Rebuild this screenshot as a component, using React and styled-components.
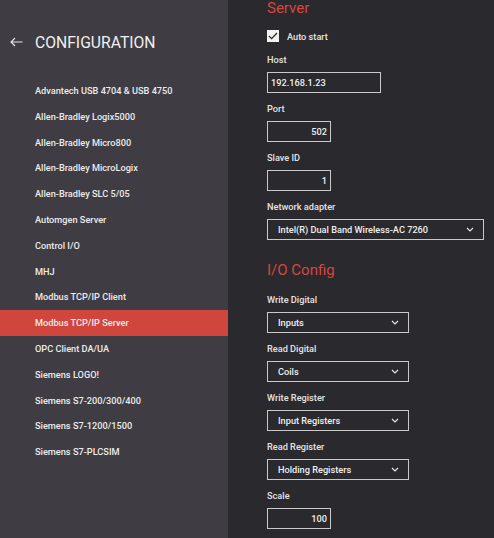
import React, { useState } from "react";
import styled, { createGlobalStyle } from "styled-components";

const GlobalStyle = createGlobalStyle`
  html, body {
    margin: 0;
    padding: 0;
    background: #2a292d;
    font-family: Roboto, "Liberation Sans", sans-serif;
  }
`;

const Page = styled.div`
  display: flex;
  width: 494px;
  height: 538px;
  overflow: hidden;
`;

const Sidebar = styled.div`
  width: 228px;
  flex-shrink: 0;
  background: #3f3d43;
  color: #ececec;
`;

const TitleBar = styled.div`
  display: flex;
  align-items: center;
  height: 42px;
  padding: 21px 0 0 10px;
  gap: 12px;
`;

const Title = styled.h1`
  margin: 0;
  font-size: 15.7px;
  font-weight: 400;
  color: #f0f0f0;
`;

const List = styled.ul`
  list-style: none;
  margin: 15px 0 0;
  padding: 0;
`;

const Item = styled.li`
  height: 25.8px;
  line-height: 25.8px;
  padding-left: 35px;
  font-size: 9.2px;
  font-weight: 500;
  color: #ececec;
  background: ${(p) => (p.$active ? "#d1463c" : "transparent")};
`;

const Main = styled.div`
  flex: 1;
  padding: 0 0 0 39px;
  color: #e4e4e4;
`;

const Heading = styled.h2`
  margin: ${(p) => (p.$first ? "-1px 0 13px" : "11px 0 15px")};
  font-size: 15px;
  font-weight: 400;
  color: #d7463e;
  line-height: 18px;
`;

const CheckRow = styled.label`
  display: flex;
  align-items: center;
  gap: 8px;
  font-size: 9.2px;
  font-weight: 500;
  margin-bottom: 12px;
`;

const Box = styled.span`
  width: 12px;
  height: 12px;
  background: #f2f2f2;
  display: flex;
  align-items: center;
  justify-content: center;
`;

const Field = styled.div`
  display: flex;
  flex-direction: column;
  gap: 6px;
  height: 49px;
`;

const Label = styled.div`
  font-size: 9.2px;
  font-weight: 500;
  line-height: 12px;
  height: 12px;
`;

const Input = styled.input`
  box-sizing: border-box;
  display: block;
  width: ${(p) => p.$w}px;
  height: 21px;
  margin: 0;
  background: transparent;
  border: 1px solid #c9c9c9;
  color: #f0f0f0;
  font-family: Roboto, "Liberation Sans", sans-serif;
  font-size: 9.2px;
  font-weight: 500;
  padding: 0 3px;
  text-align: ${(p) => (p.$right ? "right" : "left")};
  outline: none;
`;

const Select = styled.div`
  box-sizing: border-box;
  display: flex;
  align-items: center;
  justify-content: space-between;
  width: ${(p) => p.$w}px;
  height: 21px;
  flex-shrink: 0;
  border: 1px solid #c9c9c9;
  padding: 0 9px 0 10px;
  font-size: 9.2px;
  font-weight: 500;
  color: #f0f0f0;
`;

const Chevron = () => (
  <svg width="8" height="5" viewBox="0 0 8 5">
    <path d="M1 1l3 3 3-3" fill="none" stroke="#e8e8e8" strokeWidth="1.1" />
  </svg>
);

const items = [
  "Advantech USB 4704 & USB 4750",
  "Allen-Bradley Logix5000",
  "Allen-Bradley Micro800",
  "Allen-Bradley MicroLogix",
  "Allen-Bradley SLC 5/05",
  "Automgen Server",
  "Control I/O",
  "MHJ",
  "Modbus TCP/IP Client",
  "Modbus TCP/IP Server",
  "OPC Client DA/UA",
  "Siemens LOGO!",
  "Siemens S7-200/300/400",
  "Siemens S7-1200/1500",
  "Siemens S7-PLCSIM",
];

const ioSelects = [
  ["Write Digital", "Inputs"],
  ["Read Digital", "Coils"],
  ["Write Register", "Input Registers"],
  ["Read Register", "Holding Registers"],
];

export default function App() {
  const [active] = useState("Modbus TCP/IP Server");

  return (
    <>
      <GlobalStyle />
      <Page>
        <Sidebar>
          <TitleBar>
            <svg width="13" height="10" viewBox="0 0 13 10">
              <path d="M12.5 5H1M5 1L1 5l4 4" fill="none" stroke="#e8e8e8" strokeWidth="1.1" />
            </svg>
            <Title>CONFIGURATION</Title>
          </TitleBar>
          <List>
            {items.map((it) => (
              <Item key={it} $active={it === active}>
                {it}
              </Item>
            ))}
          </List>
        </Sidebar>
        <Main>
          <Heading $first>Server</Heading>
          <CheckRow>
            <Box>
              <svg width="10" height="8" viewBox="0 0 10 8">
                <path d="M1 4l2.6 2.6L9 1" fill="none" stroke="#2a292d" strokeWidth="1.3" />
              </svg>
            </Box>
            Auto start
          </CheckRow>
          <Field>
            <Label>Host</Label>
            <Input $w={114} defaultValue="192.168.1.23" />
          </Field>
          <Field>
            <Label>Port</Label>
            <Input $w={64} $right defaultValue="502" />
          </Field>
          <Field>
            <Label>Slave ID</Label>
            <Input $w={64} $right defaultValue="1" />
          </Field>
          <Field>
            <Label>Network adapter</Label>
            <Select $w={217}>
              Intel(R) Dual Band Wireless-AC 7260
              <Chevron />
            </Select>
          </Field>
          <Heading>I/O Config</Heading>
          {ioSelects.map(([label, value]) => (
            <Field key={label}>
              <Label>{label}</Label>
              <Select $w={142}>
                {value}
                <Chevron />
              </Select>
            </Field>
          ))}
          <Field>
            <Label>Scale</Label>
            <Input $w={64} $right defaultValue="100" />
          </Field>
        </Main>
      </Page>
    </>
  );
}
